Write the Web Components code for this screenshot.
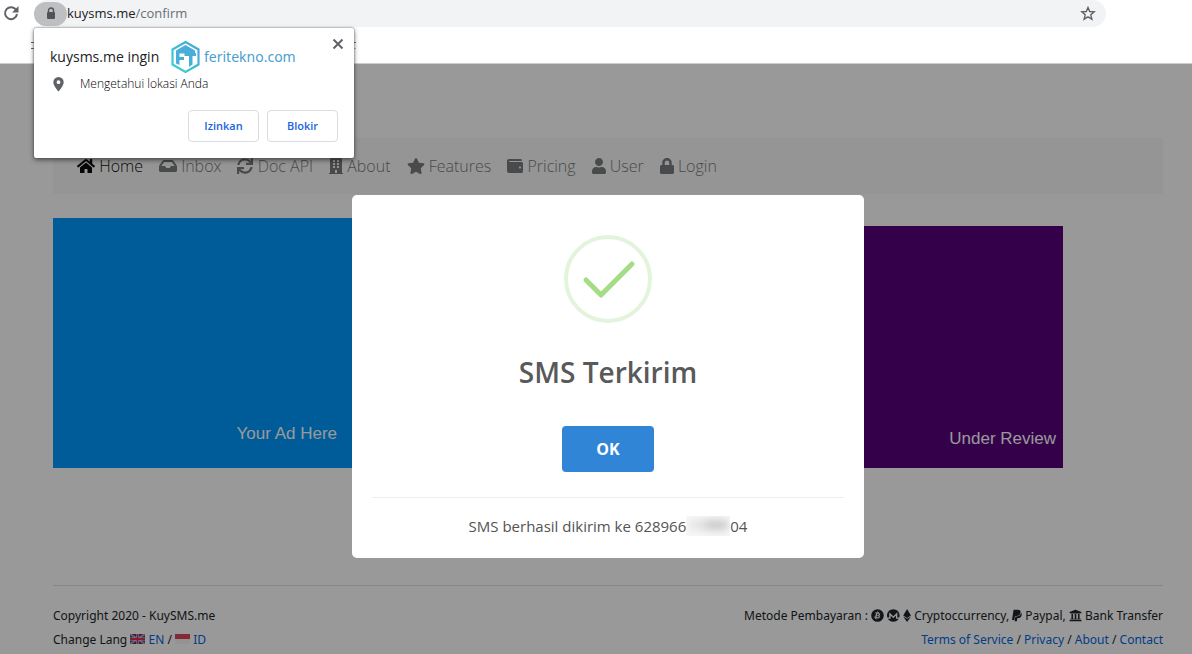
<!DOCTYPE html>
<html lang="id">
<head>
<meta charset="utf-8">
<title>KuySMS - Konfirmasi</title>
<style>
html,body{margin:0;min-height:100%}
body{font-family:"Open Sans","Noto Sans",sans-serif;background:#fff;overflow:hidden}
</style>
</head>
<body>
<kuy-browser>
  <kuy-permission slot="prompt"></kuy-permission>
  <kuy-page></kuy-page>
  <kuy-dialog slot="dialog" heading="SMS Terkirim">SMS berhasil dikirim ke 628966<kuy-masked></kuy-masked>04</kuy-dialog>
</kuy-browser>
<script>
const icons = {
  home:['0 0 576 512','M280.37 148.26L96 300.11V464a16 16 0 0 0 16 16l112.06-.29a16 16 0 0 0 15.92-16V368a16 16 0 0 1 16-16h64a16 16 0 0 1 16 16v95.64a16 16 0 0 0 16 16.05L464 480a16 16 0 0 0 16-16V300L295.67 148.26a12.19 12.19 0 0 0-15.3 0zM571.6 251.47L488 182.56V44.05a12 12 0 0 0-12-12h-56a12 12 0 0 0-12 12v72.61L318.47 43a48 48 0 0 0-61 0L4.34 251.47a12 12 0 0 0-1.6 16.9l25.5 31A12 12 0 0 0 45.15 301l235.22-193.74a12.19 12.19 0 0 1 15.3 0L530.9 301a12 12 0 0 0 16.9-1.6l25.5-31a12 12 0 0 0-1.7-16.93z'],
  inbox:['0 0 576 512','M567.938 243.908L462.25 85.374A48.003 48.003 0 0 0 422.311 64H153.689a48 48 0 0 0-39.938 21.374L8.062 243.908A47.994 47.994 0 0 0 0 270.533V400c0 26.51 21.49 48 48 48h480c26.51 0 48-21.49 48-48V270.533a47.994 47.994 0 0 0-8.062-26.625zM162.252 128h251.497l85.333 128H376l-32 64H232l-32-64H76.918l85.334-128z'],
  sync:['0 0 512 512','M440.65 12.57l4 82.77A247.16 247.16 0 0 0 255.83 8C134.73 8 33.91 94.92 12.29 209.82A12 12 0 0 0 24.09 224h49.05a12 12 0 0 0 11.67-9.26 175.91 175.91 0 0 1 317-56.94l-101.46-4.86a12 12 0 0 0-12.57 12v47.41a12 12 0 0 0 12 12H500a12 12 0 0 0 12-12V12a12 12 0 0 0-12-12h-47.37a12 12 0 0 0-11.98 12.57zM255.83 432a175.61 175.61 0 0 1-146-77.8l101.8 4.87a12 12 0 0 0 12.57-12v-47.4a12 12 0 0 0-12-12H12a12 12 0 0 0-12 12V500a12 12 0 0 0 12 12h47.35a12 12 0 0 0 12-12.6l-4.15-82.57A247.17 247.17 0 0 0 255.83 504c121.11 0 221.93-86.92 243.55-201.82a12 12 0 0 0-11.8-14.18h-49.05a12 12 0 0 0-11.67 9.26A175.86 175.86 0 0 1 255.83 432z'],
  building:['0 0 448 512','M436 480h-20V24c0-13.255-10.745-24-24-24H56C42.745 0 32 10.745 32 24v456H12c-6.627 0-12 5.373-12 12v20h448v-20c0-6.627-5.373-12-12-12zM128 76c0-6.627 5.373-12 12-12h40c6.627 0 12 5.373 12 12v40c0 6.627-5.373 12-12 12h-40c-6.627 0-12-5.373-12-12V76zm0 96c0-6.627 5.373-12 12-12h40c6.627 0 12 5.373 12 12v40c0 6.627-5.373 12-12 12h-40c-6.627 0-12-5.373-12-12v-40zm52 148h-40c-6.627 0-12-5.373-12-12v-40c0-6.627 5.373-12 12-12h40c6.627 0 12 5.373 12 12v40c0 6.627-5.373 12-12 12zm76 160h-64v-84c0-6.627 5.373-12 12-12h40c6.627 0 12 5.373 12 12v84zm64-172c0 6.627-5.373 12-12 12h-40c-6.627 0-12-5.373-12-12v-40c0-6.627 5.373-12 12-12h40c6.627 0 12 5.373 12 12v40zm0-96c0 6.627-5.373 12-12 12h-40c-6.627 0-12-5.373-12-12v-40c0-6.627 5.373-12 12-12h40c6.627 0 12 5.373 12 12v40zm0-96c0 6.627-5.373 12-12 12h-40c-6.627 0-12-5.373-12-12V76c0-6.627 5.373-12 12-12h40c6.627 0 12 5.373 12 12v40z'],
  star:['0 0 576 512','M259.3 17.8L194 150.2 47.9 171.5c-26.2 3.8-36.7 36.1-17.7 54.6l105.7 103-25 145.5c-4.5 26.3 23.2 46 46.4 33.7L288 439.6l130.7 68.7c23.2 12.2 50.9-7.4 46.4-33.7l-25-145.5 105.7-103c19-18.5 8.5-50.8-17.7-54.6L382 150.2 316.7 17.8c-11.7-23.6-45.6-23.9-57.4 0z'],
  wallet:['0 0 512 512','M461.2 128H80c-8.84 0-16-7.16-16-16s7.16-16 16-16h384c8.84 0 16-7.16 16-16 0-26.51-21.49-48-48-48H64C28.65 32 0 60.65 0 96v320c0 35.35 28.65 64 64 64h397.2c28.02 0 50.8-21.53 50.8-48V176c0-26.47-22.78-48-50.8-48zM416 336c-17.67 0-32-14.33-32-32s14.33-32 32-32 32 14.33 32 32-14.33 32-32 32z'],
  user:['0 0 448 512','M224 256c70.7 0 128-57.3 128-128S294.7 0 224 0 96 57.3 96 128s57.3 128 128 128zm89.6 32h-16.7c-22.2 10.2-46.9 16-72.9 16s-50.6-5.8-72.9-16h-16.7C60.2 288 0 348.2 0 422.4V464c0 26.5 21.5 48 48 48h352c26.5 0 48-21.5 48-48v-41.6c0-74.2-60.2-134.4-134.4-134.4z'],
  lock:['0 0 448 512','M400 224h-24v-72C376 68.2 307.8 0 224 0S72 68.2 72 152v72H48c-26.5 0-48 21.5-48 48v192c0 26.5 21.5 48 48 48h352c26.5 0 48-21.5 48-48V272c0-26.5-21.5-48-48-48zm-104 0H152v-72c0-39.7 32.3-72 72-72s72 32.3 72 72v72z'],
  bitcoin:['0 0 512 512','M504 256A248 248 0 1 1 8 256a248 248 0 1 1 496 0zM363 221c5-33-20-51-55-63l11-45-27-7-11 44-22-5 11-44-28-7-11 45-55-14-7 29c45 10 31 13 26 32l-27 110c-5 12-15 8-34 4l-14 31 53 14-12 45 28 7 11-45 22 6-11 45 27 6 12-45c47 9 82 5 97-37 12-34-1-54-25-66 18-4 31-16 35-40zM301 309c-9 34-66 16-84 11l15-60c18 5 78 14 69 49zM309 220c-8 31-55 15-70 12l14-54c15 4 65 11 56 42z'],
  monero:['0 0 496 512','M352 384h108.400C417 455.900 338.100 504 248 504S79 455.900 35.600 384H144V256.200L248 361l104-105v128zM88 336V128l159.400 159.400L408 128v208h74.800c8.500-25.100 13.200-52 13.200-80C496 119 385 8 248 8S0 119 0 256c0 28 4.600 54.900 13.200 80H88z'],
  ethereum:['0 0 320 512','M311.900 260.800L160 353.600 8 260.800 160 0l151.900 260.800zM160 383.400L8 290.600 160 512l152-221.400-152 92.800z'],
  paypal:['0 0 384 512','M111.400 295.900c-3.500 19.200-17.400 108.700-21.500 134-.3 1.800-1 2.500-3 2.500H12.300c-7.600 0-13.100-6.600-12.100-13.900L58.800 46.600c1.500-9.600 10.100-16.900 20-16.900 152.300 0 165.100-3.700 204 11.400 60.100 23.300 65.600 79.500 44 140.300-21.500 62.600-72.500 89.500-140.100 90.300-43.400.7-69.500-7-75.300 24.200zM357.100 152c-1.800-1.300-2.500-1.800-3 1.300-2 11.400-5.100 22.500-8.800 33.600-39.900 113.800-150.500 103.900-204.500 103.900-6.100 0-10.100 3.300-10.900 9.400-22.600 140.400-27.100 169.700-27.100 169.700-1 7.100 3.500 12.900 10.600 12.900h63.500c8.600 0 15.700-6.300 17.400-14.900.7-5.400-1.100 6.100 14.400-91.300 4.600-22 14.300-19.700 29.300-19.700 71 0 126.400-28.800 142.900-112.300 6.500-34.800 4.600-71.400-23.800-92.600z'],
  bank:['0 0 512 512','M496 128v16a8 8 0 0 1-8 8h-24v12c0 6.600-5.400 12-12 12H60c-6.600 0-12-5.400-12-12v-12H24a8 8 0 0 1-8-8v-16a8 8 0 0 1 5-7.400l232-88a8 8 0 0 1 6 0l232 88a8 8 0 0 1 5 7.400zm-24 304H40c-13.300 0-24 10.700-24 24v16a8 8 0 0 0 8 8h464a8 8 0 0 0 8-8v-16c0-13.300-10.700-24-24-24zM96 192v192H60c-6.600 0-12 5.400-12 12v20h416v-20c0-6.600-5.400-12-12-12h-36V192h-64v192h-64V192h-64v192h-64V192H96z']
};
const make = (name, html) => customElements.define(name, class extends HTMLElement {
  connectedCallback(){
    if (this.shadowRoot) return;
    this.attachShadow({mode:'open'}).innerHTML = typeof html === 'function' ? html(this) : html;
  }
});

make('kuy-icon', el => {
  const [box, d] = icons[el.getAttribute('name')];
  return `<style>:host{display:inline-block;height:var(--icon-size,16px);vertical-align:-2px}svg{display:block;height:100%;fill:currentColor}</style>
  <svg viewBox="${box}" aria-hidden="true"><path fill-rule="evenodd" d="${d}"/></svg>`;
});

make('kuy-masked', `<style>
:host{display:inline-block;width:44px;height:20px;vertical-align:-4px;overflow:hidden;background:#f8f8f8}
i{display:block;width:38px;height:10px;margin:4px 4px;background:linear-gradient(90deg,#ddd,#e6e6e6 25%,#c4c4c4 55%,#cbcbcb);filter:blur(4px)}
</style><i></i>`);

make('kuy-browser', `<style>
:host{display:flex;flex-direction:column;min-height:100vh}
header{position:relative;box-sizing:border-box;height:64px;background:#fff;border-bottom:1px solid #ccc}
.bar{display:flex;height:27px;padding-right:86px}
.reload{width:34px;padding:0;border:0;background:none;display:flex}
.reload svg{margin:4px 0 0 2px}
.omni{flex:1;display:flex;align-items:center;background:#f1f3f4;border-radius:14px;font-size:13px;color:#6b6f73}
.site{width:33px;height:24px;border:0;padding:0;border-radius:12px;background:#bdbfc1;display:flex;align-items:center;justify-content:center}
.url{flex:1;line-height:18px;padding-bottom:2px}.url b{font-weight:400;color:#202124}
.fav{border:0;background:none;padding:0;margin-right:10px;display:flex}
.marks{display:flex;width:325px;margin:15px 0 0 31px;justify-content:space-between}
.marks i{width:3px;height:5px;border-block:1px solid #666}
.marks i+i{border-bottom-color:#eeb35a}
.prompt{position:absolute;z-index:3;left:34px;top:28px}
main{position:relative;flex:1}
.veil{position:absolute;inset:0;background:rgba(0,0,0,.4);display:flex;justify-content:center;align-items:flex-start;padding:131px 0 0 24px;box-sizing:border-box}
</style>
<header><div class="bar">
<button class="reload" aria-label="Muat ulang"><svg width="18" height="18" viewBox="0 0 18 18"><path d="M14.200 6.100A6 6 0 1 0 15 10" fill="none" stroke="#5f6368" stroke-width="2"/><path d="M16.500 2v6.500H10z" fill="#5f6368"/></svg></button>
<div class="omni"><button class="site" aria-label="Informasi situs"><svg width="10" height="13" viewBox="0 0 10 13"><rect x="1" y="5" width="8" height="7" rx="1" fill="#505357"/><path d="M2.500 5V3.500a2.500 2.500 0 0 1 5 0V5" fill="none" stroke="#505357" stroke-width="1.400"/></svg></button>
<span class="url"><b>kuysms.me</b>/confirm</span>
<button class="fav" aria-label="Tandai"><svg width="16" height="16" viewBox="0 0 16 16"><path d="M8 1.500l1.700 4 4.500.4-3.400 2.900 1.100 4.400L8 10.900l-3.900 2.300 1.100-4.400-3.400-2.900 4.500-.4z" fill="none" stroke="#5f6368" stroke-width="1.400"/></svg></button></div></div>
<div class="marks"><i></i><i></i></div>
<div class="prompt"><slot name="prompt"></slot></div></header>
<main><slot></slot><div class="veil"><slot name="dialog"></slot></div></main>`);

make('kuy-permission', `<style>
:host{display:block;box-sizing:border-box;width:320px;height:130px;padding:11px 16px 16px;background:#fff;border-radius:2px;box-shadow:0 0 2px #555,0 2px 5px rgba(0,0,0,.5);color:#202124}
.top{display:flex;height:35px;align-items:center}
h2{font-size:14px;font-weight:400;margin:0;width:120px;line-height:32px}
.brand{display:flex;align-items:center;gap:3px;color:#4a9fd0;font:14px/20px "Noto Sans",sans-serif;flex:1}
.close{border:0;background:none;padding:0;align-self:flex-start;margin-right:-6px;display:flex}
.close svg{margin-top:-1px}
p{display:flex;align-items:center;gap:14px;margin:0 0 0 1px;font-size:12px;line-height:20px;font-weight:300;color:#000}
.acts{display:flex;justify-content:flex-end;gap:8px;margin-top:16px}
.acts button{width:71px;height:32px;background:#fff;border:1px solid #dadce0;border-radius:4px;color:#1a64dc;font:600 11px "Open Sans",sans-serif;padding:0 0 2px}
</style>
<div class="top"><h2>kuysms.me ingin</h2><span class="brand"><svg width="31" height="34" viewBox="0 0 31 34"><defs><linearGradient id="g" y1="1"><stop stop-color="#36d5d0"/><stop offset="1" stop-color="#4aa3d9"/></linearGradient></defs><path d="M15.500 2l13 7.500v15l-13 7.500-13-7.500v-15z" fill="none" stroke="url(#g)" stroke-width="2.200"/><path d="M6 13v-2.500L15.500 5 25 10.500V13h1v3h-3.500v8.500L19 27V16h-4.500v-2.500h-5V17H14v3H9.500v5L6 23.500z" fill="#4aaeda"/></svg>feritekno.com</span>
<button class="close" aria-label="Tutup"><svg width="12" height="12" viewBox="0 0 12 12"><path d="M1.500 1.500l9 9m0-9l-9 9" stroke="#5f6368" stroke-width="2"/></svg></button></div>
<p><svg width="15" height="16" viewBox="0 0 15 16"><path fill-rule="evenodd" d="M7.500 1a5.200 5.200 0 0 0-5.200 5.200C2.300 10 7.500 15.500 7.500 15.500S12.700 10 12.700 6.200A5.200 5.200 0 0 0 7.500 1zm0 3.300a1.900 1.900 0 1 1 0 3.800 1.900 1.900 0 0 1 0-3.800z" fill="#5f6368"/></svg>Mengetahui lokasi Anda</p>
<div class="acts"><button>Izinkan</button><button>Blokir</button></div>`);

make('kuy-nav-item', el => `<style>
a{display:block;color:#7b7c7d;font-size:16px;line-height:24px;text-decoration:none;white-space:nowrap;font-weight:300}
:host([active]) a{color:#0c0c0c}
</style><a href="#"><kuy-icon name="${el.getAttribute('icon')}"></kuy-icon> <slot></slot></a>`);

make('kuy-ad', `<style>
:host{display:flex;box-sizing:border-box;width:300px;justify-content:flex-end;align-items:flex-end;color:#fff;font:17px/20px "Liberation Sans",Arial,sans-serif}
</style><slot></slot>`);

make('kuy-page', `<style>
:host{display:block;background:#fff;padding:74px 29px 0 53px}
nav{display:flex;gap:16px;height:56px;align-items:center;padding:0 24px;background:#f8f8f8}
.ads{display:flex;justify-content:space-between;align-items:flex-end;margin:24px 100px 0 0}
.blue{height:250px;background:#0098ff;padding:0 16px 24px}
.violet{height:242px;background:#58007c;padding:0 7px 19px}
kuy-footer{margin-top:117px}
</style>
<nav><kuy-nav-item icon="home" active>Home</kuy-nav-item><kuy-nav-item icon="inbox">Inbox</kuy-nav-item><kuy-nav-item icon="sync">Doc API</kuy-nav-item><kuy-nav-item icon="building">About</kuy-nav-item><kuy-nav-item icon="star">Features</kuy-nav-item><kuy-nav-item icon="wallet">Pricing</kuy-nav-item><kuy-nav-item icon="user">User</kuy-nav-item><kuy-nav-item icon="lock">Login</kuy-nav-item></nav>
<div class="ads"><kuy-ad class="blue">Your Ad Here</kuy-ad><kuy-ad class="violet">Under Review</kuy-ad></div>
<kuy-footer></kuy-footer>`);

make('kuy-footer', `<style>
:host{display:flex;justify-content:space-between;border-top:1px solid #e0e0e0;padding:18px 0 2px;font-family:"Noto Sans",sans-serif;font-size:12px;line-height:24px;color:#212529;--icon-size:13px}
div+div{text-align:right}
a{color:#0067e0;text-decoration:none}
.flag{width:15px;height:10px}
</style>
<div>Copyright 2020 - KuySMS.me<br>Change Lang <svg class="flag" viewBox="0 0 15 10"><path d="M0 0h15v10H0z" fill="#33439a"/><path d="M0 0l15 10M15 0L0 10" stroke="#e4e4ee" stroke-width="1.600"/><path d="M0 0l15 10M15 0L0 10" stroke="#d33" stroke-width=".7"/><path d="M7.500 0v10M0 5h15" stroke="#e4e4ee" stroke-width="3"/><path d="M7.500 0v10M0 5h15" stroke="#d33550" stroke-width="2"/></svg> <a href="#">EN</a> / <svg class="flag" viewBox="0 0 15 10"><path d="M0 0h15v5H0z" fill="#e0455a"/><path d="M0 5h15v5H0z" fill="#f5f5f5"/></svg> <a href="#">ID</a></div>
<div>Metode Pembayaran : <kuy-icon name="bitcoin"></kuy-icon> <kuy-icon name="monero"></kuy-icon> <kuy-icon name="ethereum"></kuy-icon> Cryptoccurrency, <kuy-icon name="paypal"></kuy-icon> Paypal, <kuy-icon name="bank"></kuy-icon> Bank Transfer<br><a href="#">Terms of Service</a> / <a href="#">Privacy</a> / <a href="#">About</a> / <a href="#">Contact</a></div>`);

make('kuy-dialog', el => `<style>
:host{display:flex;flex-direction:column;align-items:center;box-sizing:border-box;width:512px;padding:40px 20px 20px;background:#fff;border-radius:5px;color:#545454}
h1{font-size:28px;line-height:40px;font-weight:600;color:#595959;margin:29px 0 34px}
button{width:92px;height:46px;border:0;border-radius:4px;background:#3085d6;color:#fff;font:700 16px "Open Sans",sans-serif;padding:0}
footer{align-self:stretch;box-sizing:border-box;margin-top:25px;border-top:1px solid #eee;padding-top:17px;text-align:center;font-size:15px;line-height:23px}
</style>
<svg width="88" height="88" viewBox="0 0 88 88"><circle cx="44" cy="44" r="42" fill="none" stroke="#e4f4dc" stroke-width="4"/><path d="M22 45l15 15 31-31" fill="none" stroke="#a5dc86" stroke-width="5" stroke-linecap="round" stroke-linejoin="round"/></svg>
<h1>${el.getAttribute('heading')}</h1><button>OK</button><footer><slot></slot></footer>`);
</script>
</body>
</html>
